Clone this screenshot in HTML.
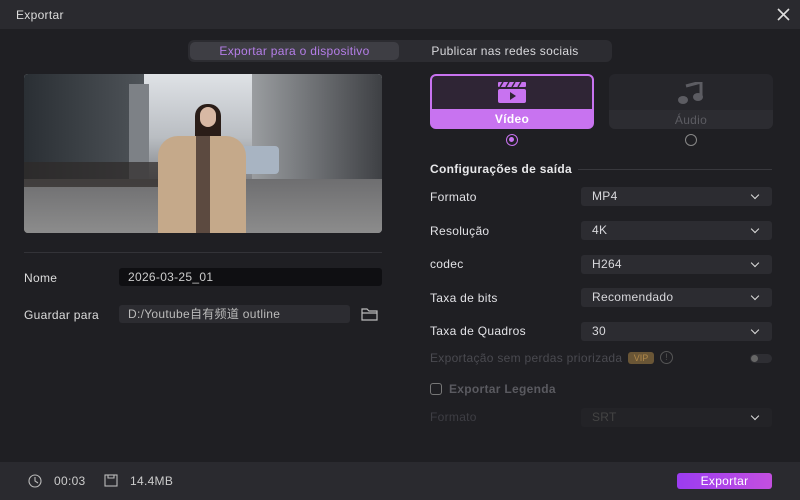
<!DOCTYPE html>
<html><head><meta charset="utf-8"><style>
*{margin:0;padding:0;box-sizing:border-box}
body{width:800px;height:500px;background:#1f1f23;font-family:"Liberation Sans","Noto Sans CJK SC",sans-serif;color:#d8d8dc;position:relative;overflow:hidden;font-size:12px;letter-spacing:0.3px}
.a{position:absolute}
.sel{position:absolute;left:581px;width:191px;height:19px;background:#2c2c31;border-radius:3px;padding-left:11px;line-height:19px;font-size:12px;color:#d8d8dc}
.sel:after{content:"";position:absolute;right:14px;top:5px;width:5px;height:5px;border-right:1.5px solid #ddd;border-bottom:1.5px solid #ddd;transform:rotate(45deg)}
.lab{position:absolute;left:430px;font-size:12px;color:#e2e2e6}
</style></head><body>
<div class="a" style="left:0;top:0;width:800px;height:29px;background:#2a2a2f"></div>
<div class="a" style="left:16px;top:8px;color:#ddd">Exportar</div>
<svg class="a" style="left:777px;top:8px" width="13" height="13"><path d="M1 1L12 12M12 1L1 12" stroke="#ddd" stroke-width="1.6"/></svg>
<div class="a" style="left:188px;top:40px;width:424px;height:22px;background:#2c2c31;border-radius:6px"></div>
<div class="a" style="left:190px;top:42px;width:209px;height:18px;background:#3e3e44;border-radius:5px;color:#b57ee8;text-align:center;line-height:18px">Exportar para o dispositivo</div>
<div class="a" style="left:400px;top:42px;width:210px;height:18px;color:#d8d8dc;text-align:center;line-height:18px">Publicar nas redes sociais</div>
<div class="a" style="left:24px;top:74px;width:358px;height:159px;border-radius:4px;overflow:hidden;background:linear-gradient(#dfe2e6,#b9bdc2 40%,#7a7c80 70%,#8a8b8e)">
<div class="a" style="left:0;top:0;width:120px;height:110px;background:linear-gradient(90deg,#2a2f34,#4e5358)"></div>
<div class="a" style="left:105px;top:10px;width:20px;height:95px;background:#7d8186"></div>
<div class="a" style="left:228px;top:0;width:130px;height:110px;background:linear-gradient(90deg,#9a9da0,#3e4044)"></div>
<div class="a" style="left:215px;top:72px;width:40px;height:28px;background:#a8b4c2;border-radius:4px"></div>
<div class="a" style="left:0;top:105px;width:358px;height:54px;background:linear-gradient(#6e6e70,#8c8c8c)"></div>
<div class="a" style="left:0;top:88px;width:140px;height:25px;background:#2e2a28;opacity:.7"></div>
<div class="a" style="left:171px;top:30px;width:26px;height:36px;background:#2a1d18;border-radius:12px 12px 4px 4px"></div>
<div class="a" style="left:176px;top:33px;width:16px;height:20px;background:#d8b8a4;border-radius:8px"></div>
<div class="a" style="left:134px;top:62px;width:88px;height:97px;background:#c5a98a;border-radius:20px 20px 0 0"></div>
<div class="a" style="left:172px;top:62px;width:14px;height:97px;background:#5c4a40"></div>
</div>
<div class="a" style="left:24px;top:252px;width:358px;height:1px;background:#333338"></div>
<div class="a" style="left:24px;top:271px;color:#ddd">Nome</div>
<div class="a" style="left:119px;top:268px;width:263px;height:18px;background:#0f0f12;border-radius:3px;padding-left:9px;line-height:18px;color:#ccc">2026-03-25_01</div>
<div class="a" style="left:24px;top:308px;color:#ddd">Guardar para</div>
<div class="a" style="left:119px;top:305px;width:231px;height:18px;background:#2c2c31;border-radius:3px;padding-left:9px;line-height:18px;color:#bbb">D:/Youtube自有频道 outline</div>
<svg class="a" style="left:361px;top:307px" width="17" height="14"><path d="M1 2h5l2 2h8v9H1z M1 6h15" fill="none" stroke="#bbb" stroke-width="1.2"/></svg>
<div class="a" style="left:430px;top:74px;width:164px;height:55px;border-radius:6px;background:#c873f0;overflow:hidden">
<div class="a" style="left:2px;top:2px;width:160px;height:33px;background:#2f2535;border-radius:4px 4px 0 0"></div>
<div class="a" style="left:0;top:38px;width:164px;text-align:center;font-weight:bold;color:#fff">Vídeo</div>
<svg class="a" style="left:68px;top:8px" width="28" height="21"><rect x="0" y="0" width="28" height="5" rx="1" fill="#c873f0"/><path d="M5 0l-3 5M11 0l-3 5M17 0l-3 5M23 0l-3 5" stroke="#2f2535" stroke-width="1.5"/><rect x="0" y="7" width="28" height="14" rx="2" fill="#c873f0"/><path d="M12 10v8l6-4z" fill="#2f2535"/></svg>
</div>
<div class="a" style="left:609px;top:74px;width:164px;height:55px;border-radius:6px;background:#26262b;overflow:hidden">
<div class="a" style="left:0;top:36px;width:164px;height:19px;background:#2c2c31"></div>
<div class="a" style="left:0;top:39px;width:164px;text-align:center;color:#5c5c62">Áudio</div>
<svg class="a" style="left:69px;top:8px" width="26" height="22"><path d="M8 4l15-4v15" stroke="#5c5c62" stroke-width="3" fill="none"/><ellipse cx="5" cy="18" rx="5" ry="4" fill="#5c5c62"/><ellipse cx="20" cy="15" rx="5" ry="4" fill="#5c5c62"/></svg>
</div>
<div class="a" style="left:506px;top:134px;width:12px;height:12px;border:1.5px solid #c873f0;border-radius:50%"><div style="margin:2px;width:5px;height:5px;background:#c873f0;border-radius:50%"></div></div>
<div class="a" style="left:685px;top:134px;width:12px;height:12px;border:1px solid #888;border-radius:50%"></div>
<div class="a" style="left:430px;top:162px;font-weight:bold;color:#e8e8ea">Configurações de saída</div>
<div class="a" style="left:578px;top:169px;width:194px;height:1px;background:#38383d"></div>
<div class="lab" style="top:190px">Formato</div><div class="sel" style="top:187px">MP4</div>
<div class="lab" style="top:224px">Resolução</div><div class="sel" style="top:221px">4K</div>
<div class="lab" style="top:257px">codec</div><div class="sel" style="top:255px">H264</div>
<div class="lab" style="top:291px">Taxa de bits</div><div class="sel" style="top:288px">Recomendado</div>
<div class="lab" style="top:324px">Taxa de Quadros</div><div class="sel" style="top:322px">30</div>
<div class="lab" style="top:351px;color:#4a4a50">Exportação sem perdas priorizada</div>
<div class="a" style="left:628px;top:352px;width:26px;height:12px;background:#6a5636;border-radius:3px;color:#b0884a;font-size:9px;text-align:center;line-height:12px;letter-spacing:0">VIP</div>
<div class="a" style="left:660px;top:351px;width:13px;height:13px;border:1px solid #555;border-radius:50%;color:#555;font-size:9px;text-align:center;line-height:11px">!</div>
<div class="a" style="left:750px;top:354px;width:22px;height:9px;background:#2e2e33;border-radius:5px"><div style="margin:1px;width:7px;height:7px;background:#666;border-radius:50%"></div></div>
<div class="a" style="left:430px;top:383px;width:12px;height:12px;border:1px solid #777;border-radius:3px"></div>
<div class="a" style="left:449px;top:382px;font-weight:bold;color:#5a5a60">Exportar Legenda</div>
<div class="lab" style="top:410px;color:#3e3e44">Formato</div>
<div class="sel" style="top:408px;background:#232327;color:#444">SRT</div>
<div class="a" style="left:0;top:462px;width:800px;height:38px;background:#2a2a2f"></div>
<svg class="a" style="left:28px;top:474px" width="14" height="14"><circle cx="7" cy="7" r="6" fill="none" stroke="#bbb" stroke-width="1.1"/><path d="M7 3v4l3 2" fill="none" stroke="#bbb" stroke-width="1.1"/></svg>
<div class="a" style="left:54px;top:474px;color:#ccc">00:03</div>
<svg class="a" style="left:104px;top:474px" width="14" height="13"><rect x="1" y="1" width="12" height="11" fill="none" stroke="#bbb" stroke-width="1.1"/><path d="M4 1v3h6V1" fill="none" stroke="#bbb" stroke-width="1.1"/></svg>
<div class="a" style="left:130px;top:474px;color:#ccc">14.4MB</div>
<div class="a" style="left:677px;top:473px;width:95px;height:16px;border-radius:3px;background:linear-gradient(90deg,#9b3cf0,#c34fe0);color:#fff;text-align:center;line-height:16px">Exportar</div>
</body></html>
